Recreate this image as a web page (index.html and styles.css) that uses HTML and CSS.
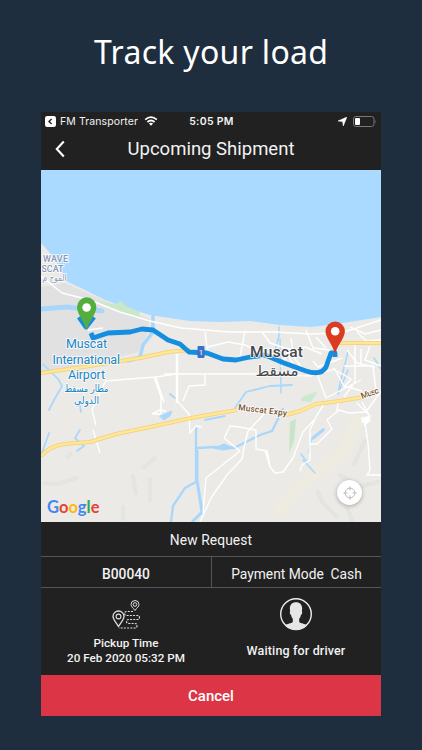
FILE: index.html
```html
<!DOCTYPE html>
<html lang="en">
<head>
    <meta charset="UTF-8">
    <meta name="viewport" content="width=device-width, initial-scale=1.0">
    <title>Track your load</title>
    <link rel="stylesheet" href="styles.css">
</head>
<body>
    <h1 class="headline"><svg width="240" height="50" viewBox="0 0 240 50"><text x="3" y="34" textLength="234">Track your load</text></svg></h1>

    <div class="phone">
        <div class="status-bar">
            <div class="status-left">
                <svg width="11" height="11" viewBox="0 0 11 11"><rect width="11" height="11" rx="2.2" fill="#fff"/><path d="M6.6 3 4 5.5 6.6 8" fill="none" stroke="#222" stroke-width="1.4"/></svg>
                <span class="back-app">FM Transporter</span>
                <svg class="wifi" width="14" height="10" viewBox="0 0 14 10"><g fill="none" stroke="#fff" stroke-width="1.8"><path d="M1.2 3.6Q7-1.4 12.8 3.6"/><path d="M3.4 6Q7 3 10.6 6"/></g><path d="M4.9 7.6Q7 5.9 9.1 7.6L7 9.8Z" fill="#fff"/></svg>
            </div>
            <span class="clock">5:05 PM</span>
            <div class="status-right">
                <svg width="9" height="9" viewBox="0 0 9 9"><path d="M8.900 0 5.300 9 4.600 4.600 0 4Z" fill="#fff" stroke="#fff" stroke-width=".5"/></svg>
                <svg width="24" height="11" viewBox="0 0 24 11"><rect x=".5" y=".5" width="20.5" height="10" rx="2.4" fill="none" stroke="#777"/><rect x="2" y="2" width="5" height="7" rx="1" fill="#fff"/><path d="M22.3 3.7q1.5 1.8 0 3.6z" fill="#777"/></svg>
            </div>
        </div>

        <div class="nav-bar">
            <svg class="back" width="10" height="18" viewBox="0 0 10 18"><path d="M8.8 1.5 1.8 9l7 7.5" fill="none" stroke="#fff" stroke-width="2.1"/></svg>
            <span class="nav-title">Upcoming Shipment</span>
        </div>

        <div class="map">
            <svg class="map-canvas" width="340" height="352" viewBox="41 170 340 352">
                <rect x="41" y="170" width="340" height="352" fill="#aadaff"/>
                <!-- land -->
                <path d="M41 243 50 253 60 268 66 281 83 289 105 300 130 309 150 315 170 318 190 321 220 322 250 321 280 325 310 327 330 325 355 321 381 317V522H41Z" fill="#ebeae6"/>
                <path d="M41 287 65 283 100 299 150 319 146 336 138 352 90 364 41 372Z" fill="#e1e1e1"/>
                <path d="M92 301 116 304 121 301 126 306 140 312 139 319 120 312Z" fill="#c8e8c9"/>
                <path d="M290 422 296 419 294 441 289 453Z" fill="#c6e5c9"/>
                <path d="M302 397 318 391 311 402 301 401Z" fill="#cbe9cf"/>
                <!-- hills -->
                <g fill="none" stroke="#f0eddb" stroke-width="13" opacity=".55" stroke-linecap="round">
                    <path d="M357 422 345 450 320 470 298 487 280 511"/>
                </g>
                <g fill="none" stroke="#dededb" stroke-width="4" opacity=".5" stroke-linecap="round">
                    <path d="M44 483 58 484 76 478M133 476 136 493M150 479V500M68 457 70 454M318 492 322 502 337 517M365 441 354 464M347 508 352 520M340 475 358 487 378 482M123 507V519M144 467 155 458"/>
                </g>
                <!-- water -->
                <g fill="none" stroke="#a9d7fb" stroke-linecap="round" stroke-linejoin="round">
                    <path d="M41 309 67 307 102 311" stroke-width="5"/>
                    <path d="M153 316V332L143 345 140 357 128 361" stroke-width="3.5"/>
                    <path d="M43 364 58 379 62 386 54 400 49 410M79 401 81 412M49 433 42 453M80 430 75 438 84 446 77 451" stroke-width="1.7"/>
                    <path d="M196 428V482L185 488 173 506 171 522M197 448 214 447 234 448 260 435 272 431 283 409" stroke-width="2.3"/>
                    <path d="M197 451V480L202 512 193 521" stroke-width="3"/>
                    <path d="M205 420 225 416M235 408 246 392 270 386 292 385M170 394 175 398" stroke-width="1.8"/>
                    <path d="M279 327V336L275 350M280 339 281 393M348 352 340 383 338 394 348 370M374 358 381 369M324 429 311 440 309 452M303 460 315 473M301 454 307 462" stroke-width="1.5"/>
                    <path d="M160 416 172 411 170 416 164 420Z" fill="#a9d7fb"/>
                    <path d="M214 448 224 444 234 448 224 450Z" fill="#a9d7fb"/>
                    <path d="M313 438 323 430" stroke-width="3"/>
                </g>
                <!-- minor roads -->
                <g fill="none" stroke="#fff" stroke-width="1.4" stroke-linejoin="round">
                    <path d="M41 276 62 293 90 300 120 312 150 321 181 328 230 332 276 332 310 334 341 333 381 320"/>
                    <path d="M88 330 103 328M105 381 156 377 176 374M105 382 92 410 96 425M93 430 100 453M154 377 161 397V414H153M156 378 164 402"/>
                    <path d="M177 354V403" stroke-width="2.5"/>
                    <path d="M205 332 208 355M208 347 228 342 245 345 260 352M245 331 240 357M262 332 270 343 294 351 305 347 322 354"/>
                    <path d="M164 374H270L310 376 335 369M183 401 189 386 205 385V375"/>
                    <path d="M291 338 293 352M306 330 313 348 330 350M316 337 326 348M302 368 292 355M317 374 326 398M290 348 281 367M288 355 296 369M334 368 344 386 362 391M347 350 357 363 375 367M355 345V382L344 397M361 349V366M370 346 365 360 381 366M344 366H373L376 391M326 398 361 380M337 371 351 379 344 387M313 361 318 367 342 358M357 332 366 341 381 340M350 327 365 334 381 330"/>
                    <path d="M178 402 189 414 190 433 196 426 202 427M152 414 160 410 166 411M239 427 230 426 224 438"/>
                    <path d="M200 522 211 498 227 475 242 459 244 448 248 431 265 413M203 513 206 478 240 451 224 438M239 427 256 430 256 449 267 451 270 466"/>
                    <path d="M265 450 270 467 275 473 283 472 293 458 303 432 314 420M326 401 317 415 310 430 310 460 302 465 300 471M310 444H317L332 429 327 420 339 410 349 413 366 412 381 391M362 402 370 417 365 423 368 443 370 470 367 475 381 475M338 403 337 411M357 403 370 416"/>
                </g>
                <path d="M361 419 369 417 362 422 370 420 364 425" fill="none" stroke="#fff" stroke-width="2"/>
                <!-- highways -->
                <g fill="none" stroke-linejoin="round">
                    <g stroke="#f3cf79" stroke-width="4">
                        <path d="M41 373 90 366 140 358 168 352 191 350"/>
                        <path d="M335 343H381"/>
                        <path d="M41 456Q50 446 64 444L90 442 116 434 150 427 191 418 237 410M286 415 300 411 316 404 340 401 364 397"/>
                    </g>
                    <g stroke="#ffe795" stroke-width="2.5">
                        <path d="M41 373 90 366 140 358 168 352 191 350"/>
                        <path d="M335 343H381"/>
                        <path d="M41 456Q50 446 64 444L90 442 116 434 150 427 191 418 237 410M286 415 300 411 316 404 340 401 364 397"/>
                    </g>
                </g>
                <!-- route -->
                <path d="M79 317 86 327 94 317M91 333 93 338 99 336 108 333 130 332 142 329 153 330 162 336 168 340 180 344 189 352 207 353 223 359 236 360 250 357 265 355 284 363 306 371Q321 376 326 367L331 353H335V357" fill="none" stroke="#158ee0" stroke-width="4.8" stroke-linejoin="round"/>
                <rect x="197.500" y="346" width="7" height="12" rx="1" fill="#3d6fc5"/>
                <text class="shield" x="201" y="355">1</text>

                <g class="label-area">
                    <text x="43" y="261.500" textLength="25">WAVE</text>
                    <text x="41.500" y="271.500" textLength="22">SCAT</text>
                    <text x="54.500" y="281" class="arabic" textLength="24" lengthAdjust="spacingAndGlyphs">الموج م</text>
                </g>
                <g class="label-airport">
                    <text x="66" y="348" textLength="41">Muscat</text>
                    <text x="52.500" y="363.500" textLength="67.500">International</text>
                    <text x="68" y="379" textLength="37">Airport</text>
                    <text x="86.500" y="392" class="arabic" textLength="44" lengthAdjust="spacingAndGlyphs">مطار مسقط</text>
                    <text x="86.500" y="404" class="arabic" textLength="25" lengthAdjust="spacingAndGlyphs">الدولي</text>
                </g>
                <g class="label-city">
                    <text x="250" y="357" textLength="53">Muscat</text>
                    <text x="277" y="376" class="arabic">مسقط</text>
                </g>
                <text class="label-road" transform="translate(238 410) rotate(7)" textLength="49">Muscat Expy</text>
                <text class="label-road" transform="translate(362 399) rotate(-20)" textLength="18.500">Musc</text>

                <!-- pins -->
                <g>
                    <path d="M86.500 330C84 321 77 314 77 307a9.700 9.700 0 0 1 19.400 0C96.400 314 89 321 86.500 330Z" fill="#55ad3c"/>
                    <circle cx="86.600" cy="307.500" r="4.300" fill="#fff"/>
                    <path d="M335 354C333 345 325.500 338 325.500 331.300a9.700 9.700 0 0 1 19.400 0C344.900 338 337.500 345 335 354Z" fill="#dd3b20"/>
                    <circle cx="335.200" cy="331.300" r="4.300" fill="#fff"/>
                </g>

                <text class="google" x="47" y="512.500"><tspan fill="#4285f4">G</tspan><tspan fill="#ea4335">o</tspan><tspan fill="#fbbc05">o</tspan><tspan fill="#4285f4">g</tspan><tspan fill="#34a853">l</tspan><tspan fill="#ea4335">e</tspan></text>
            </svg>
            <div class="locate">
                <svg width="14" height="14" viewBox="0 0 14 14" fill="none" stroke="#bbb"><circle cx="7" cy="7" r="4.900"/><path d="M7 .5v4M7 9.500v4M.5 7h4M9.500 7h4"/></svg>
            </div>
        </div>

        <div class="request">New Request</div>
        <div class="order">
            <div class="order-id">B00040</div>
            <div class="payment">Payment Mode&nbsp; Cash</div>
        </div>
        <div class="details">
            <div class="pickup">
                <svg width="28" height="29" viewBox="0 0 28 29" fill="none" stroke="#ddd">
                    <path d="M6.500 26.500C4 22 1 19.500 1 16.500a5.500 5.500 0 0 1 11 0c0 3-3 5.500-5.500 10Z" stroke-width="1.300"/>
                    <circle cx="6.500" cy="16.500" r="2.400" stroke-width="1.100"/>
                    <path d="M23 10.500C21 7.500 19 6.500 19 4.500a4 4 0 0 1 8 0c0 2-2 3-4 6Z"/>
                    <circle cx="23" cy="4.500" r="1.800"/>
                    <path d="M21 11.500H15q-2.500 0-2.500 2t2.500 2H25q2.500 0 2.500 2t-2.500 2H17q-2.500 0-2.500 2t2.500 2h6q2 0 2 2.200t-2 2.300H7" stroke-dasharray="2 1.200" stroke-width="1.200"/>
                </svg>
                <div class="pickup-label">Pickup Time</div>
                <div class="pickup-time">20 Feb 2020 05:32 PM</div>
            </div>
            <div class="driver">
                <svg width="34" height="34" viewBox="0 0 34 34">
                    <circle cx="17" cy="17" r="15.300" fill="none" stroke="#eee" stroke-width="1.400"/>
                    <path d="M11.200 14.500C10 9 12 5.200 17 5.200s7 3.800 5.800 9.300c.8.300.3 3-.8 3.300-.4 2-1 3-1.800 4V25c1.500 1.700 5.500 1.500 8 3.400A15.500 15.500 0 0 1 5.800 28.400C8.300 26.500 12.300 26.700 13.800 25v-3.200c-.8-1-1.400-2-1.800-4-1.100-.3-1.600-3-.8-3.300Z" fill="#e6e6e6"/>
                </svg>
                <div class="driver-status">Waiting for driver</div>
            </div>
        </div>
        <button class="cancel">Cancel</button>
    </div>
</body>
</html>
```
FILE: styles.css
```css
* {
    box-sizing: border-box;
}
body {
    margin: 0;
    height: 750px;
    overflow: hidden;
    background-color: #1f2e3e;
    font-family: Roboto, sans-serif;
    color: #f2f2f2;
}
.headline {
    margin: 0;
    height: 112px;
    padding-top: 30px;
    text-align: center;
    font-size: 32px;
    font-weight: 400;
    font-family: "Noto Sans", sans-serif;
}
.headline text {
    fill: #fff;
}
svg {
    display: block;
    flex: none;
}
.headline svg {
    margin: 0 auto;
}
.phone {
    width: 340px;
    height: 604px;
    margin-left: 41px;
    background-color: #212121;
}
.status-bar {
    display: grid;
    grid-template-columns: 1fr auto 1fr;
    align-items: center;
    height: 18px;
    padding: 0 4px;
    font-family: Inter, sans-serif;
    font-size: 10.5px;
}
.status-left,
.status-right {
    display: flex;
    align-items: center;
    gap: 4px;
}
.status-right {
    justify-content: flex-end;
    gap: 6px;
}
.back-app {
    letter-spacing: 0.1px;
    white-space: nowrap;
}
.wifi {
    margin-left: 2px;
}
.clock {
    font-weight: 600;
    letter-spacing: 0.3px;
    padding-left: 1px;
}
.nav-bar {
    display: grid;
    grid-template-columns: 24px 1fr 24px;
    align-items: center;
    height: 40px;
    padding: 0 14px;
}
.back {
    margin-top: -2px;
}
.nav-title {
    text-align: center;
    font-size: 18.5px;
    line-height: 38px;
    letter-spacing: 0;
    padding-bottom: 2px;
}
.map {
    position: relative;
    height: 352px;
}
.locate {
    position: absolute;
    right: 19px;
    bottom: 17px;
    display: flex;
    align-items: center;
    justify-content: center;
    width: 25px;
    height: 25px;
    border-radius: 50%;
    background-color: #fff;
    box-shadow: 0 1px 4px rgba(0, 0, 0, 0.3);
}
.map-canvas text {
    font-family: Roboto, "DejaVu Sans", sans-serif;
    paint-order: stroke;
    stroke: rgba(255, 255, 255, 0.75);
    stroke-width: 2px;
    stroke-linejoin: round;
}
.map-canvas .arabic {
    font-family: "DejaVu Sans", sans-serif;
    text-anchor: middle;
}
.map-canvas .shield {
    font-size: 8px;
    text-anchor: middle;
    fill: #fff;
    stroke: none;
}
.label-area {
    font-size: 9px;
    font-weight: 500;
    fill: #8b99b8;
}
.label-airport {
    font-size: 12.5px;
    fill: #1a86c8;
}
.label-airport .arabic {
    font-size: 10px;
}
.label-city {
    font-size: 15.5px;
    font-weight: 500;
    fill: #44474b;
}
.label-city .arabic {
    font-size: 15px;
    font-weight: 400;
}
.label-road {
    font-size: 8.5px;
    font-weight: 500;
    fill: #79522e;
}
.map-canvas .google {
    font-family: Lato, sans-serif;
    font-size: 16.5px;
    font-weight: 700;
    stroke: none;
}
.request {
    height: 34px;
    line-height: 36px;
    text-align: center;
    font-size: 13.8px;
    letter-spacing: 0.1px;
}
.order {
    display: grid;
    grid-template-columns: 171px 1fr;
    height: 32px;
    border-top: 1px solid #555;
    border-bottom: 1px solid #555;
    line-height: 34px;
    text-align: center;
    font-size: 13.8px;
}
.order-id {
    height: 30px;
    font-weight: 500;
    border-right: 1px solid #555;
}
.payment {
    height: 30px;
    white-space: nowrap;
}
.details {
    display: grid;
    grid-template-columns: 1fr 1fr;
    height: 87px;
    text-align: center;
    font-size: 11.7px;
    font-weight: 500;
}
.details svg {
    margin: 0 auto;
}
.pickup {
    padding-top: 12px;
}
.pickup-label {
    margin-top: 7px;
    line-height: 15px;
}
.pickup-time {
    line-height: 15px;
}
.driver {
    padding-top: 9px;
}
.driver-status {
    margin-top: 12px;
    line-height: 16px;
    font-size: 12.5px;
    letter-spacing: 0.15px;
}
.cancel {
    display: block;
    width: 100%;
    height: 41px;
    padding: 0;
    border: none;
    background-color: #dc3545;
    color: #fff;
    font-family: inherit;
    font-size: 15px;
    font-weight: 500;
}
```
